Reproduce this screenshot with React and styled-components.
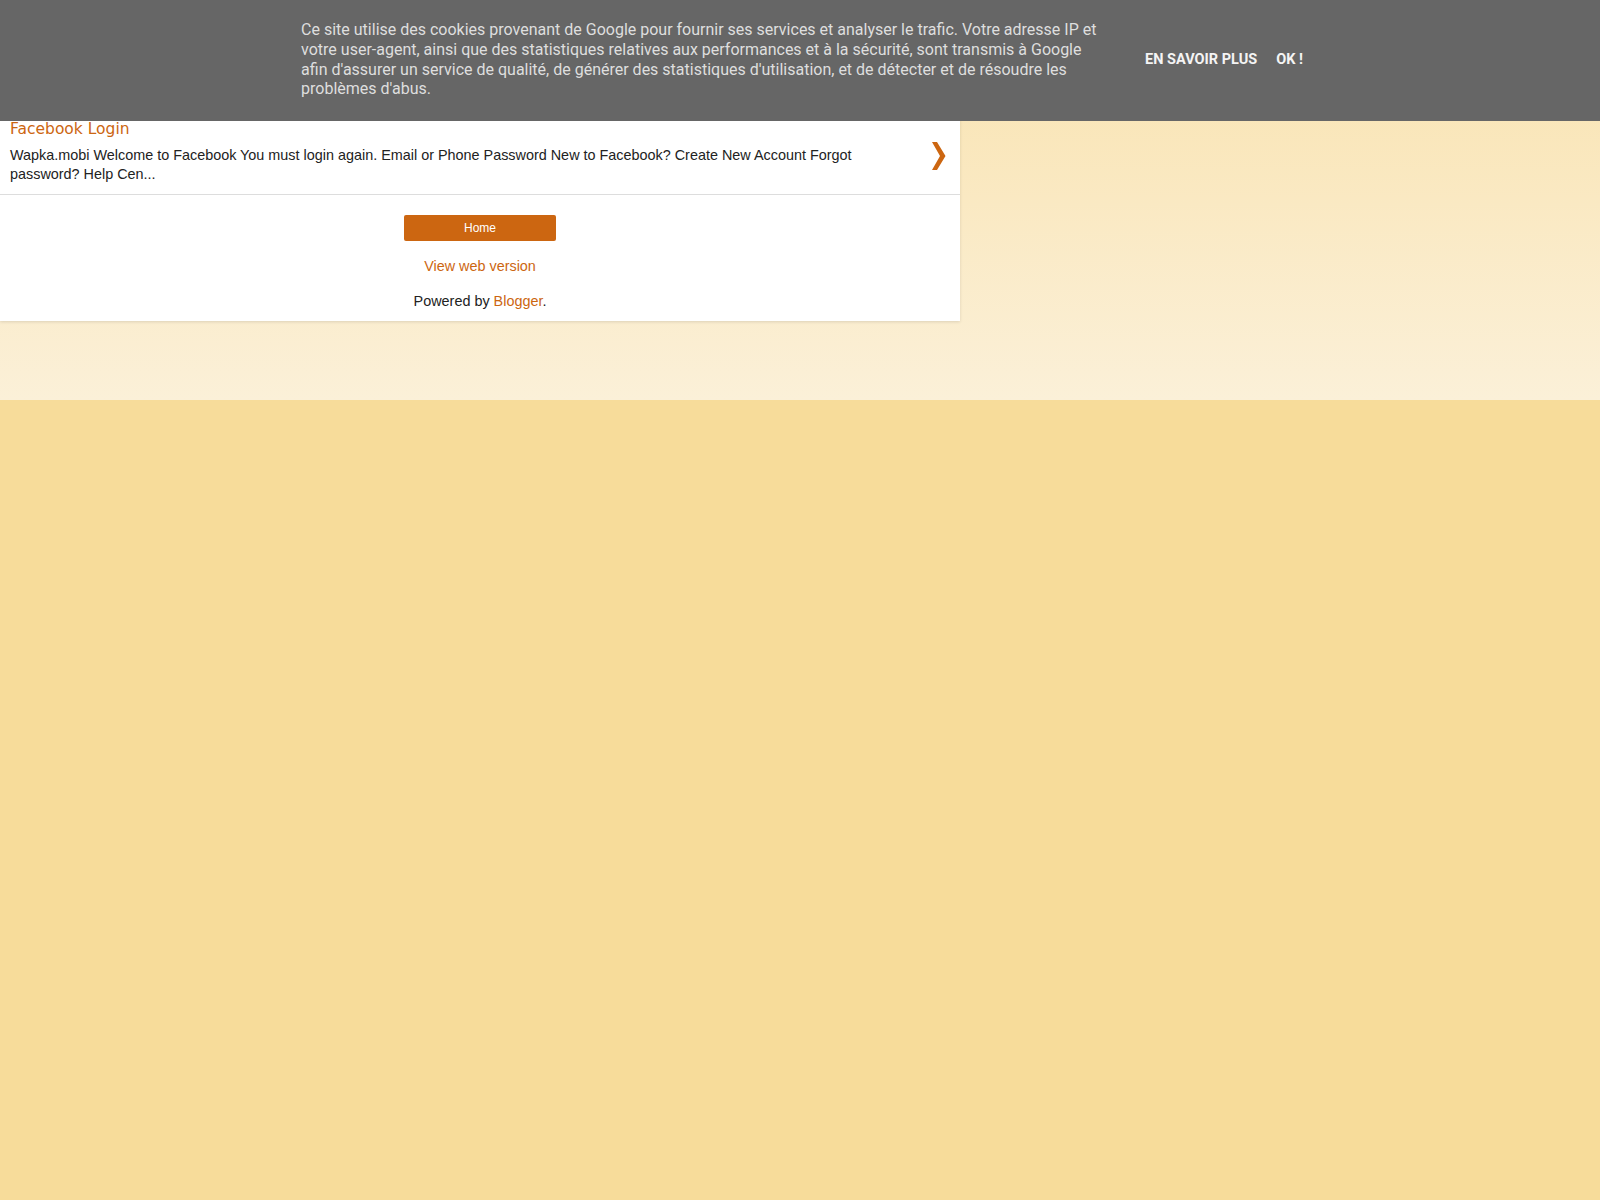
import React from "react";
import styled, { createGlobalStyle } from "styled-components";

const Global = createGlobalStyle`
  html, body { margin: 0; padding: 0; }
  body {
    background: #f7dc9a;
    font-family: "Liberation Sans", Arial, sans-serif;
    min-height: 1200px;
  }
`;

const Page = styled.div`
  min-height: 1200px;
  background: linear-gradient(to bottom, #f9e2ad 0px, #fbf0d8 400px, #f7dc9a 400px, #f7dc9a 100%);
`;

const CookieBar = styled.div`
  position: fixed;
  top: 0;
  left: 0;
  right: 0;
  z-index: 255;
  background: #666666;
  height: 121px;
  padding-left: 4px;
  display: flex;
  justify-content: center;
  align-items: center;
  font-family: Roboto, "Liberation Sans", sans-serif;
`;

const CookieText = styled.div`
  width: 800px;
  font-size: 16px;
  line-height: 19.8px;
  color: #dedede;
  margin: 0;
  transform: translateY(-1.5px);
`;

const CookieButtons = styled.div`
  display: flex;
  gap: 19px;
  margin-left: 44px;
  margin-top: -2px;
`;

const CookieButton = styled.a`
  font-size: 14.5px;
  font-weight: bold;
  text-transform: uppercase;
  color: #f4f4f4;
  text-decoration: none;
  cursor: pointer;
`;

const Panel = styled.div`
  width: 960px;
  background: #ffffff;
  padding-top: 119px;
  box-shadow: 0 1px 3px rgba(0, 0, 0, 0.12);
`;

const PostRow = styled.div`
  display: flex;
  align-items: flex-start;
  padding: 0 14px 10px 10px;
  border-bottom: 1px solid #dddddd;
`;

const PostBody = styled.div`
  flex: 1;
`;

const PostTitle = styled.a`
  display: block;
  font-family: "DejaVu Sans", Verdana, sans-serif;
  font-size: 15.5px;
  line-height: 20px;
  color: #cc6611;
  text-decoration: none;
  margin-bottom: 7px;
`;

const Snippet = styled.div`
  font-size: 14.4px;
  line-height: 19px;
  color: #222222;
`;

const Arrow = styled.div`
  width: 14px;
  margin-left: 36px;
  margin-top: 23px;
  display: flex;
`;

const Footer = styled.div`
  display: flex;
  flex-direction: column;
  align-items: center;
  padding: 20px 0 11px;
`;

const HomeButton = styled.a`
  display: flex;
  align-items: center;
  justify-content: center;
  width: 152px;
  height: 26px;
  background: #cc6611;
  border-radius: 2px;
  color: #ffffff;
  font-size: 12px;
  text-decoration: none;
`;

const WebLink = styled.a`
  margin-top: 16px;
  font-size: 14.4px;
  line-height: 18px;
  color: #cc6611;
  text-decoration: none;
`;

const Powered = styled.div`
  margin-top: 17px;
  font-size: 14.4px;
  line-height: 18px;
  color: #222222;
`;

const OrangeLink = styled.a`
  color: #cc6611;
  text-decoration: none;
`;

export default function App() {
  return (
    <>
      <Global />
      <Page>
        <CookieBar>
          <CookieText>
            Ce site utilise des cookies provenant de Google pour fournir ses services et analyser le trafic. Votre adresse IP et votre user-agent, ainsi que des statistiques relatives aux performances et à la sécurité, sont transmis à Google afin d'assurer un service de qualité, de générer des statistiques d'utilisation, et de détecter et de résoudre les problèmes d'abus.
          </CookieText>
          <CookieButtons>
            <CookieButton>En savoir plus</CookieButton>
            <CookieButton>OK !</CookieButton>
          </CookieButtons>
        </CookieBar>
        <Panel>
          <PostRow>
            <PostBody>
              <PostTitle>Facebook Login</PostTitle>
              <Snippet>
                Wapka.mobi Welcome to Facebook You must login again. Email or Phone Password New to Facebook? Create New Account Forgot password? Help Cen...
              </Snippet>
            </PostBody>
            <Arrow>
              <svg width="14" height="28" viewBox="0 0 14 28">
                <polygon points="0,0 5,0 13.5,14 5,28 0,28 8,14" fill="#cc6611" />
              </svg>
            </Arrow>
          </PostRow>
          <Footer>
            <HomeButton>Home</HomeButton>
            <WebLink>View web version</WebLink>
            <Powered>
              Powered by <OrangeLink>Blogger</OrangeLink>.
            </Powered>
          </Footer>
        </Panel>
      </Page>
    </>
  );
}
